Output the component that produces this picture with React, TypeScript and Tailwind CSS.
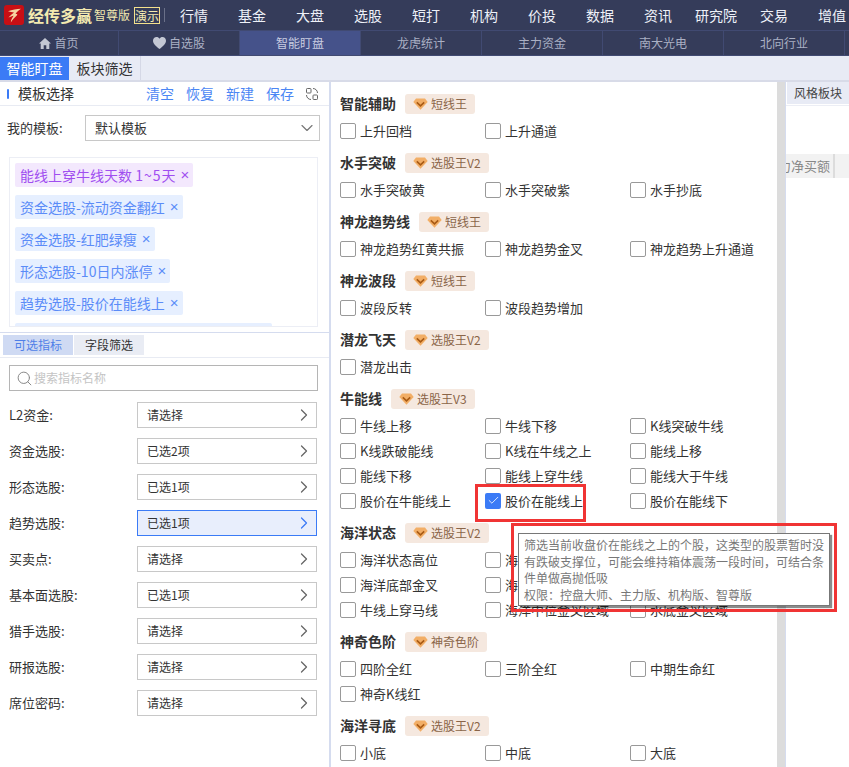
import React from "react";
import { ChevronDown, ChevronRight, Search, Check } from "lucide-react";

const font = { fontFamily: '"Noto Sans CJK SC", "Liberation Sans", sans-serif' };

const topNav = ["行情", "基金", "大盘", "选股", "短打", "机构", "价投", "数据", "资讯", "研究院", "交易", "增值"];
const tabs = ["首页", "自选股", "智能盯盘", "龙虎统计", "主力资金", "南大光电", "北向行业"];
const tags = ["资金选股-流动资金翻红", "资金选股-红肥绿瘦", "形态选股-10日内涨停", "趋势选股-股价在能线上"];
const filters: [string, string, boolean?][] = [
  ["L2资金:", "请选择"],
  ["资金选股:", "已选2项"],
  ["形态选股:", "已选1项"],
  ["趋势选股:", "已选1项", true],
  ["买卖点:", "请选择"],
  ["基本面选股:", "已选1项"],
  ["猎手选股:", "请选择"],
  ["研报选股:", "请选择"],
  ["席位密码:", "请选择"],
];
const groups: { t: string; b: string; o: string[] }[] = [
  { t: "智能辅助", b: "短线王", o: ["上升回档", "上升通道"] },
  { t: "水手突破", b: "选股王V2", o: ["水手突破黄", "水手突破紫", "水手抄底"] },
  { t: "神龙趋势线", b: "短线王", o: ["神龙趋势红黄共振", "神龙趋势金叉", "神龙趋势上升通道"] },
  { t: "神龙波段", b: "短线王", o: ["波段反转", "波段趋势增加"] },
  { t: "潜龙飞天", b: "选股王V2", o: ["潜龙出击"] },
  {
    t: "牛能线",
    b: "选股王V3",
    o: ["牛线上移", "牛线下移", "K线突破牛线", "K线跌破能线", "K线在牛线之上", "能线上移", "能线下移", "能线上穿牛线", "能线大于牛线", "股价在牛能线上", "股价在能线上", "股价在能线下"],
  },
  { t: "海洋状态", b: "选股王V2", o: ["海洋状态高位", "海洋状态低位", "水底状态", "海洋底部金叉", "海洋顶部死叉", "水底金叉", "牛线上穿马线", "海洋中位金叉区域", "水底金叉区域"] },
  { t: "神奇色阶", b: "神奇色阶", o: ["四阶全红", "三阶全红", "中期生命红", "神奇K线红"] },
  { t: "海洋寻底", b: "选股王V2", o: ["小底", "中底", "大底"] },
];

function Gem() {
  return (
    <svg width="15" height="12" viewBox="0 0 15 12" className="shrink-0">
      <path d="M3 0.5h9l2.700 3.600L7.500 11.700.3 4.100z" fill="#f2ae66" />
      <path d="M3.800 4.400l3.700 3.500 3.700-3.500" fill="none" stroke="#a85a14" strokeWidth="1.600" />
    </svg>
  );
}

function Group({ t, b, o }: { t: string; b: string; o: string[] }) {
  return (
    <div className="flex flex-col">
      <div className="flex items-center h-[20px] gap-[9px]">
        <span className="mb-[2px] text-[14px] font-bold text-[#333] leading-[20px] whitespace-nowrap">{t}</span>
        <span className="flex items-center h-[20px] px-[8px] gap-[3px] rounded-[3px] bg-[#f5e8df] text-[12px] text-[#8a6548] whitespace-nowrap">
          <Gem />
          {b}
        </span>
      </div>
      <div className="grid grid-cols-[145px_145px_145px] mt-[4px]">
        {o.map((x) => {
          const on = x === "股价在能线上";
          return (
            <div key={x} className="flex items-center h-[25px] gap-[4px]">
              {on ? (
                <span className="w-[16px] h-[16px] rounded-[2px] bg-[#3b7bf6] flex items-center justify-center">
                  <Check size={13} color="#fff" strokeWidth={1.5} />
                </span>
              ) : (
                <span className="w-[16px] h-[16px] rounded-[2px] border border-[#999] bg-white" />
              )}
              <span className="text-[13px] text-[#333] whitespace-nowrap">{x}</span>
            </div>
          );
        })}
      </div>
    </div>
  );
}

function TagX() {
  return <span className="ml-[5px] w-[8px] text-center text-[15px] leading-[20px] [font-family:'Liberation_Sans',sans-serif]">×</span>;
}

export default function App() {
  return (
    <div style={font} className="relative w-[849px] h-[767px] overflow-hidden bg-white flex flex-col">
      {/* top bar */}
      <div className="h-[30px] bg-[#353c5a] flex items-center shrink-0">
        <svg width="20" height="20" viewBox="0 0 20 20" className="ml-[4px] shrink-0">
          <rect width="20" height="20" rx="3" fill="#c80f14" />
          <path d="M4 6.200C8 4.600 13 4.300 17 3.800 14.500 5.600 12.800 7 11.500 9 13.200 8.800 14 9.500 12.500 10.800 10.500 12.600 8.500 14.500 6.800 17.500 7 14.500 8.300 12.500 9.600 10.700 8 11 6.500 11.500 4.500 12.500 6 10.500 7.800 9 10 7.400 8 7 6 6.800 4 6.200Z" fill="#f6d4a0" />
        </svg>
        <span className="ml-[4px] shrink-0 text-[16px] font-bold text-[#f3eab0] whitespace-nowrap w-[66px]">经传多赢</span>
        <span className="shrink-0 text-[12px] text-[#f3eab0] whitespace-nowrap w-[40px]">智尊版</span>
        <span className="shrink-0 w-[26px] h-[17px] border border-[#f3e08c] text-[12px] leading-[15px] text-center text-[#f3eab0] whitespace-nowrap">演示</span>
        <span className="shrink-0 ml-[4px] w-px h-[14px] bg-[#6a7088]" />
        {topNav.map((n) => (
          <span key={n} className="w-[58px] shrink-0 text-center text-[14px] text-[#eef1f8]">{n}</span>
        ))}
      </div>
      {/* tabs */}
      <div className="h-[26px] shrink-0 bg-[#353c5a] border-t border-t-[#414a72] border-b border-b-[#414a72] flex">
        {tabs.map((n, i) => (
          <div
            key={n}
            className={
              i === 0
                ? "w-[119px] shrink-0 flex items-center justify-center gap-[3px] text-[12px] text-[#aab0c4] border-r border-r-[#414a72]"
                : i === 2
                ? "w-[121px] shrink-0 flex items-center justify-center gap-[3px] text-[12px] bg-[#45528a] text-[#c8cce0] border-r border-r-[#414a72]"
                : "w-[121px] shrink-0 flex items-center justify-center gap-[3px] text-[12px] text-[#aab0c4] border-r border-r-[#414a72]"
            }
          >
            {i === 0 && (
              <svg width="12" height="11" viewBox="0 0 12 11">
                <path d="M6 0L0 5.500h1.700V11h3V7.300h2.600V11h3V5.500H12z" fill="#c4c8d4" />
              </svg>
            )}
            {i === 1 && (
              <svg width="13" height="12" viewBox="0 0 13 12">
                <path d="M6.500 12C2.500 8.800 0 6.700 0 3.700 0 1.500 1.600 0 3.500 0 4.800 0 5.900.7 6.500 1.700 7.100.7 8.200 0 9.500 0 11.400 0 13 1.500 13 3.700 13 6.700 10.500 8.800 6.500 12z" fill="#c4c8d4" />
              </svg>
            )}
            {n}
          </div>
        ))}
      </div>
      {/* sub tabs */}
      <div className="h-[26px] shrink-0 bg-[#e8ebf5] border-b-2 border-b-[#d8dbe8] flex">
        <div className="w-[69px] mt-[1px] flex items-center justify-center bg-[#3b7bf6] text-white text-[14px]">智能盯盘</div>
        <div className="w-[72px] flex items-center justify-center text-[#333] text-[14px] border-r border-r-[#d5d8e6]">板块筛选</div>
      </div>

      <div className="flex-1 flex min-h-0">
        {/* left */}
        <div className="w-[331px] shrink-0 border-r-2 border-r-[#d5dcef] flex flex-col">
          <div className="h-[24px] shrink-0 flex items-center border-b border-b-[#e8ebf3] pl-[7px] pr-[11px]">
            <span className="w-[2px] h-[10px] bg-[#3b7bf6] rounded-[1px]" />
            <span className="ml-[9px] text-[14px] text-[#333] w-[128px] whitespace-nowrap">模板选择</span>
            <div className="flex gap-[12px] text-[14px] text-[#4b86f4] whitespace-nowrap">
              <span>清空</span>
              <span>恢复</span>
              <span>新建</span>
              <span>保存</span>
            </div>
            <svg width="12" height="12" viewBox="0 0 12 12" className="ml-[12px]" fill="none" stroke="#666" strokeWidth="1">
              <rect x="0.500" y="0.500" width="4.500" height="4.500" rx="0.800" />
              <rect x="7" y="7" width="4.500" height="4.500" rx="0.800" />
              <path d="M7 .5c2.500 0 4.500 2 4.500 4.500M5 11.500c-2.500 0-4.500-2-4.500-4.500" />
            </svg>
          </div>
          <div className="mt-[9px] flex items-center pl-[7px]">
            <span className="w-[78px] text-[13px] text-[#333] whitespace-nowrap">我的模板:</span>
            <div className="w-[235px] h-[26px] border border-[#c8c8c8] flex items-center justify-between pl-[9px] pr-[2px] text-[13px] text-[#333]">
              默认模板
              <ChevronDown size={20} color="#777" strokeWidth={1.4} />
            </div>
          </div>
          <div className="mt-[16px] ml-[9px] w-[309px] h-[170px] overflow-hidden border border-[#eceef5] p-[5px] flex flex-col items-start gap-[8px]">
            <div className="h-[24px] shrink-0 rounded-[2px] bg-[#f3e8fd] px-[5px] flex items-center text-[14px] text-[#a04ef0] whitespace-nowrap">
              <span>
                能线上穿牛线天数 <span className="tracking-[1px]">1~5</span>天
              </span>
              <TagX />
            </div>
            {tags.map((t) => (
              <div key={t} className="h-[24px] shrink-0 rounded-[2px] bg-[#e6efff] px-[5px] flex items-center text-[14px] text-[#5b8cf8] whitespace-nowrap">
                {t}
                <TagX />
              </div>
            ))}
            <div className="h-[24px] shrink-0 w-[257px] rounded-[2px] bg-[#e6efff]" />
          </div>
          <div className="mt-[5px] h-[26px] shrink-0 border-t border-t-[#d5dcef] border-b border-b-[#e8ebf3] pl-[3px] pt-[2px] flex gap-[1px]">
            <div className="w-[70px] h-[20px] bg-[#cfdaf3] flex items-center justify-center text-[12px] text-[#4f7fe8]">可选指标</div>
            <div className="w-[70px] h-[20px] bg-[#e9ecf4] flex items-center justify-center text-[12px] text-[#333]">字段筛选</div>
          </div>
          <div className="mt-[7px] ml-[9px] w-[309px] h-[26px] border border-[#b5b5b5] flex items-center pl-[6px] gap-[1px] text-[12px] text-[#c4c4c4]">
            <Search size={17} color="#888" strokeWidth={1.4} />
            搜索指标名称
          </div>
          <div className="mt-[11px] flex flex-col gap-[10px]">
            {filters.map(([l, v, on]) => (
              <div key={l} className="flex items-center h-[26px] pl-[9px]">
                <span className="w-[128px] text-[13px] text-[#333] whitespace-nowrap">{l}</span>
                <div
                  className={
                    on
                      ? "w-[180px] h-[26px] border border-[#3b7bf6] bg-[#e8eefc] flex items-center justify-between pl-[9px] pr-[2px] text-[12px] text-[#333]"
                      : "w-[180px] h-[26px] border border-[#c8c8c8] flex items-center justify-between pl-[9px] pr-[2px] text-[12px] text-[#333]"
                  }
                >
                  {v}
                  <ChevronRight size={20} color={on ? "#3b7bf6" : "#666"} strokeWidth={1.5} />
                </div>
              </div>
            ))}
          </div>
        </div>

        {/* centre */}
        <div className="w-[446px] shrink-0 pl-[9px] pt-[12px] flex flex-col gap-[10px] overflow-hidden">
          {groups.map((g) => (
            <Group key={g.t} {...g} />
          ))}
        </div>
        <div className="w-[8px] shrink-0 bg-[#dcdcdc]" />

        {/* right */}
        <div className="flex-1 min-w-0 border-l border-l-[#d5dcef] flex flex-col overflow-hidden">
          <div className="h-[24px] shrink-0 border-b border-b-[#eceef5]">
            <div className="h-[22px] ml-[1px] bg-[#e8ebf5] flex items-center justify-center text-[12px] text-[#444] whitespace-nowrap">风格板块</div>
          </div>
          <div className="mt-[48px] h-[24px] bg-[#f2f2f2] flex text-[13px] text-[#888]">
            <div className="w-[49px] shrink-0 border-r-2 border-r-[#dcdcdc] flex items-center justify-end pr-[3px] overflow-hidden whitespace-nowrap">主力净买额</div>
          </div>
        </div>
      </div>

      {/* tooltip */}
      <div className="absolute left-[518px] top-[533px] w-[312px] h-[73px] bg-white border border-[#777] px-[5px] pt-[3px] text-[12px] leading-[16.7px] text-[#777] shadow-[2px_2px_1px_rgba(0,0,0,0.45)]">
        筛选当前收盘价在能线之上的个股，这类型的股票暂时没有跌破支撑位，可能会维持箱体震荡一段时间，可结合条件单做高抛低吸
        <br />
        权限：控盘大师、主力版、机构版、智尊版
      </div>
      {/* annotations */}
      <div className="absolute left-[475px] top-[484px] w-[111px] h-[38px] border-[3px] border-[#f03434]" />
      <div className="absolute left-[511px] top-[523px] w-[326px] h-[89px] border-[3px] border-[#f03434]" />
    </div>
  );
}
